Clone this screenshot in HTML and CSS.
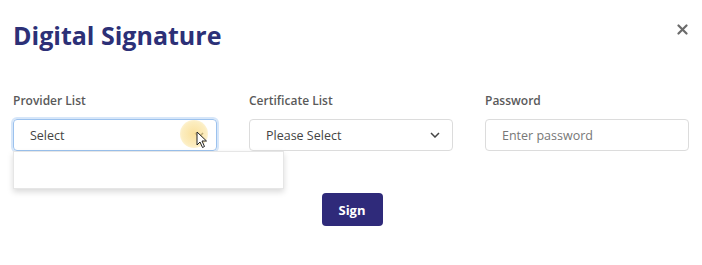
FILE: index.html
```html
<!DOCTYPE html>
<html>
<head>
<meta charset="utf-8">
<link rel="stylesheet" href="styles.css">
</head>
<body>
<div class="modal">
  <div class="header">
    <h1 class="title">Digital Signature</h1>
    <button class="close" aria-label="Close">
      <svg width="11" height="11" viewBox="0 0 11 11"><path d="M1.5 1.5 L9.5 9.5 M9.5 1.5 L1.5 9.5" stroke="#6b6b6b" stroke-width="2.2" stroke-linecap="round"/></svg>
    </button>
  </div>
  <div class="fields">
    <div class="field">
      <label class="label">Provider List</label>
      <div class="control select focused">
        <span>Select</span>
        <svg class="chev" width="10" height="6" viewBox="0 0 10 6"><path d="M1 1 L5 5 L9 1" fill="none" stroke="#444" stroke-width="1.5"/></svg>
        <span class="cursor-glow"></span>
        <svg class="cursor" width="12" height="18" viewBox="0 0 12 18"><path d="M1 1 L1 14 L4 11 L6.5 16.5 L8.5 15.5 L6 10 L10.5 10 Z" fill="#fff" stroke="#222" stroke-width="1"/></svg>
        <div class="dropdown"></div>
      </div>
    </div>
    <div class="field">
      <label class="label">Certificate List</label>
      <div class="control select">
        <span>Please Select</span>
        <svg class="chev" width="10" height="6" viewBox="0 0 10 6"><path d="M1 1 L5 5 L9 1" fill="none" stroke="#444" stroke-width="1.5"/></svg>
      </div>
    </div>
    <div class="field">
      <label class="label">Password</label>
      <div class="control input"><span class="ph">Enter password</span></div>
    </div>
  </div>
  <div class="actions">
    <button class="sign">Sign</button>
  </div>
</div>
</body>
</html>
```
FILE: styles.css
```css
* { box-sizing: border-box; }
body {
  margin: 0;
  background: #fff;
  font-family: "Open Sans", "Noto Sans", sans-serif;
  width: 702px;
  height: 265px;
  overflow: hidden;
}
.modal { padding: 0 13px 0 13px; }
.header {
  display: flex;
  justify-content: space-between;
  align-items: flex-start;
  height: 92px;
}
.title {
  margin: 19px 0 0 0;
  font-size: 25px;
  font-weight: 700;
  color: #2c3077;
  letter-spacing: 0;
  line-height: 33px;
}
.close {
  border: 0;
  background: none;
  padding: 0;
  margin: 24px 1px 0 0;
  width: 11px;
  height: 11px;
  display: flex;
}
.fields {
  display: grid;
  grid-template-columns: 204px 204px 204px;
  column-gap: 32px;
}
.field { display: flex; flex-direction: column; }
.label {
  font-size: 12px;
  font-weight: 600;
  color: #5a5a5a;
  line-height: 17px;
  margin-bottom: 10px;
}
.control {
  position: relative;
  height: 32px;
  border: 1px solid #dcdcdc;
  border-radius: 4px;
  display: flex;
  align-items: center;
  padding: 0 16px;
  font-size: 12.5px;
  color: #444;
}
.select { justify-content: space-between; padding-right: 12px; }
.focused {
  border-color: #9cc2ee;
  box-shadow: 0 0 0 2px #d6e6f9;
}
.ph { color: #777; }
.chev { display: block; }
.cursor-glow {
  position: absolute;
  left: 166px;
  top: 0;
  width: 28px;
  height: 28px;
  border-radius: 50%;
  background: radial-gradient(circle, rgba(250,220,140,0.85) 0%, rgba(250,225,150,0.6) 60%, rgba(250,230,170,0) 100%);
}
.cursor {
  position: absolute;
  left: 182px;
  top: 11px;
}
.dropdown {
  position: absolute;
  left: -1px;
  top: 31px;
  width: 271px;
  height: 38px;
  background: #fff;
  border: 1px solid #e6e6e6;
  box-shadow: 0 3px 6px rgba(0,0,0,0.15);
}
.actions {
  display: flex;
  justify-content: center;
  margin-top: 42px;
}
.sign {
  width: 61px;
  height: 33px;
  border: 0;
  border-radius: 4px;
  background: #2f2a7a;
  color: #fff;
  font-family: "Open Sans", sans-serif;
  font-weight: 700;
  font-size: 13px;
  margin-left: 2px;
}
```
